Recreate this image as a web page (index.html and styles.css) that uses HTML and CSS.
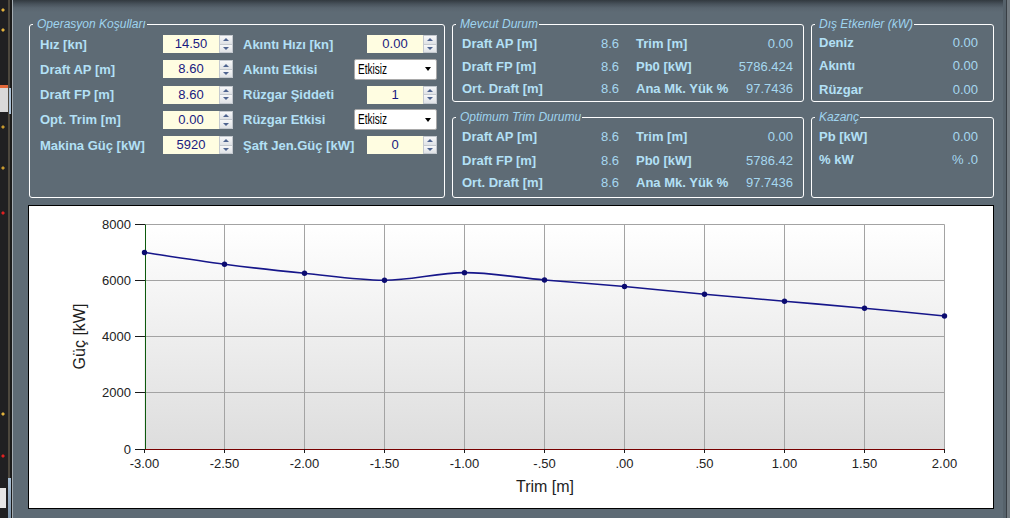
FILE: index.html
```html
<!DOCTYPE html>
<html lang="tr">
<head>
<meta charset="utf-8">
<title>Trim Optimizasyonu</title>
<link rel="stylesheet" href="styles.css">
</head>
<body>
<div class="window">
  <div class="edge-left"></div>
  <main class="main">
    <div class="top-row">
      <fieldset class="group g-op">
        <legend>Operasyon Koşulları</legend>
        <div class="op-grid">
          <span class="lbl">Hız [kn]</span>
          <div class="num"><span class="num-val">14.50</span><span class="spin"><i class="up"></i><i class="dn"></i></span></div>
          <span class="lbl lbl2">Akıntı Hızı [kn]</span>
          <div class="num num-r"><span class="num-val">0.00</span><span class="spin"><i class="up"></i><i class="dn"></i></span></div>

          <span class="lbl">Draft AP [m]</span>
          <div class="num"><span class="num-val">8.60</span><span class="spin"><i class="up"></i><i class="dn"></i></span></div>
          <span class="lbl lbl2">Akıntı Etkisi</span>
          <div class="combo"><span class="combo-text">Etkisiz</span><span class="combo-arrow"></span></div>

          <span class="lbl">Draft FP [m]</span>
          <div class="num"><span class="num-val">8.60</span><span class="spin"><i class="up"></i><i class="dn"></i></span></div>
          <span class="lbl lbl2">Rüzgar Şiddeti</span>
          <div class="num num-r"><span class="num-val">1</span><span class="spin"><i class="up"></i><i class="dn"></i></span></div>

          <span class="lbl">Opt. Trim [m]</span>
          <div class="num"><span class="num-val">0.00</span><span class="spin"><i class="up"></i><i class="dn"></i></span></div>
          <span class="lbl lbl2">Rüzgar Etkisi</span>
          <div class="combo"><span class="combo-text">Etkisiz</span><span class="combo-arrow"></span></div>

          <span class="lbl">Makina Güç [kW]</span>
          <div class="num"><span class="num-val">5920</span><span class="spin"><i class="up"></i><i class="dn"></i></span></div>
          <span class="lbl lbl2">Şaft Jen.Güç [kW]</span>
          <div class="num num-r"><span class="num-val">0</span><span class="spin"><i class="up"></i><i class="dn"></i></span></div>
        </div>
      </fieldset>

      <div class="col col-mid">
        <fieldset class="group g-a">
          <legend>Mevcut Durum</legend>
          <div class="kv-mid rows-a">
            <span class="lbl">Draft AP [m]</span><span class="val">8.6</span>
            <span class="lbl lbl3">Trim [m]</span><span class="val">0.00</span>
            <span class="lbl">Draft FP [m]</span><span class="val">8.6</span>
            <span class="lbl lbl3">Pb0 [kW]</span><span class="val">5786.424</span>
            <span class="lbl">Ort. Draft [m]</span><span class="val">8.6</span>
            <span class="lbl lbl3">Ana Mk. Yük %</span><span class="val">97.7436</span>
          </div>
        </fieldset>
        <fieldset class="group g-b">
          <legend>Optimum Trim Durumu</legend>
          <div class="kv-mid rows-b">
            <span class="lbl">Draft AP [m]</span><span class="val">8.6</span>
            <span class="lbl lbl3">Trim [m]</span><span class="val">0.00</span>
            <span class="lbl">Draft FP [m]</span><span class="val">8.6</span>
            <span class="lbl lbl3">Pb0 [kW]</span><span class="val">5786.42</span>
            <span class="lbl">Ort. Draft [m]</span><span class="val">8.6</span>
            <span class="lbl lbl3">Ana Mk. Yük %</span><span class="val">97.7436</span>
          </div>
        </fieldset>
      </div>

      <div class="col col-right">
        <fieldset class="group g-a">
          <legend>Dış Etkenler (kW)</legend>
          <div class="kv-right rows-c">
            <span class="lbl">Deniz</span><span class="val">0.00</span>
            <span class="lbl">Akıntı</span><span class="val">0.00</span>
            <span class="lbl">Rüzgar</span><span class="val">0.00</span>
          </div>
        </fieldset>
        <fieldset class="group g-b">
          <legend>Kazanç</legend>
          <div class="kv-right rows-d">
            <span class="lbl">Pb [kW]</span><span class="val">0.00</span>
            <span class="lbl">% kW</span><span class="val">% .0</span>
          </div>
        </fieldset>
      </div>
    </div>

    <div class="chart">
      <svg class="chart-svg" width="964" height="302" viewBox="0 0 964 302" xmlns="http://www.w3.org/2000/svg">
        <defs>
          <linearGradient id="plotbg" x1="0" y1="0" x2="0" y2="1">
            <stop offset="0" stop-color="#ffffff"/>
            <stop offset="1" stop-color="#dddddd"/>
          </linearGradient>
        </defs>
        <rect x="115.5" y="18.5" width="800" height="225" fill="url(#plotbg)"/>
        <g stroke="#a3a3a3" stroke-width="1" fill="none">
          <line x1="115.5" y1="18.5" x2="915.5" y2="18.5"/>
          <line x1="115.5" y1="74.5" x2="915.5" y2="74.5"/>
          <line x1="115.5" y1="130.5" x2="915.5" y2="130.5"/>
          <line x1="115.5" y1="186.5" x2="915.5" y2="186.5"/>
          <line x1="195.5" y1="18.5" x2="195.5" y2="243"/>
          <line x1="275.5" y1="18.5" x2="275.5" y2="243"/>
          <line x1="355.5" y1="18.5" x2="355.5" y2="243"/>
          <line x1="435.5" y1="18.5" x2="435.5" y2="243"/>
          <line x1="515.5" y1="18.5" x2="515.5" y2="243"/>
          <line x1="595.5" y1="18.5" x2="595.5" y2="243"/>
          <line x1="675.5" y1="18.5" x2="675.5" y2="243"/>
          <line x1="755.5" y1="18.5" x2="755.5" y2="243"/>
          <line x1="835.5" y1="18.5" x2="835.5" y2="243"/>
          <line x1="915.5" y1="18.5" x2="915.5" y2="243"/>
        </g>
        <line x1="116.5" y1="18.5" x2="116.5" y2="243.5" stroke="#0d5a0d" stroke-width="1"/>
        <line x1="116" y1="243.5" x2="916" y2="243.5" stroke="#780000" stroke-width="1"/>
        <g stroke="#1a1a1a" stroke-width="1">
          <line x1="106" y1="18.5" x2="116" y2="18.5"/>
          <line x1="106" y1="74.5" x2="116" y2="74.5"/>
          <line x1="106" y1="130.5" x2="116" y2="130.5"/>
          <line x1="106" y1="186.5" x2="116" y2="186.5"/>
          <line x1="106" y1="243.5" x2="116" y2="243.5"/>
          <line x1="115.5" y1="243" x2="115.5" y2="247"/>
          <line x1="195.5" y1="243" x2="195.5" y2="247"/>
          <line x1="275.5" y1="243" x2="275.5" y2="247"/>
          <line x1="355.5" y1="243" x2="355.5" y2="247"/>
          <line x1="435.5" y1="243" x2="435.5" y2="247"/>
          <line x1="515.5" y1="243" x2="515.5" y2="247"/>
          <line x1="595.5" y1="243" x2="595.5" y2="247"/>
          <line x1="675.5" y1="243" x2="675.5" y2="247"/>
          <line x1="755.5" y1="243" x2="755.5" y2="247"/>
          <line x1="835.5" y1="243" x2="835.5" y2="247"/>
          <line x1="915.5" y1="243" x2="915.5" y2="247"/>
        </g>
        <g class="tick-y" text-anchor="end">
          <text x="102" y="23">8000</text>
          <text x="102" y="79">6000</text>
          <text x="102" y="135">4000</text>
          <text x="102" y="191">2000</text>
          <text x="102" y="248">0</text>
        </g>
        <g class="tick-x" text-anchor="middle">
          <text x="115.5" y="262">-3.00</text>
          <text x="195.5" y="262">-2.50</text>
          <text x="275.5" y="262">-2.00</text>
          <text x="355.5" y="262">-1.50</text>
          <text x="435.5" y="262">-1.00</text>
          <text x="515.5" y="262">-.50</text>
          <text x="595.5" y="262">.00</text>
          <text x="675.5" y="262">.50</text>
          <text x="755.5" y="262">1.00</text>
          <text x="835.5" y="262">1.50</text>
          <text x="915.5" y="262">2.00</text>
        </g>
        <text class="axis-title" text-anchor="middle" transform="translate(56 130.5) rotate(-90)">Güç [kW]</text>
        <text class="axis-title" text-anchor="middle" x="516" y="286">Trim [m]</text>
        <path d="M115.5,46.5 C128.83,48.46 168.83,54.81 195.5,58.26 C222.17,61.71 248.83,64.56 275.5,67.22 C302.17,69.88 328.83,74.31 355.5,74.22 C382.17,74.13 408.83,66.71 435.5,66.66 C462.17,66.61 488.83,71.64 515.5,73.94 C542.17,76.25 568.83,78.11 595.5,80.49 C622.17,82.87 648.83,85.77 675.5,88.22 C702.17,90.68 728.83,92.89 755.5,95.22 C782.17,97.55 808.83,99.75 835.5,102.22 C862.17,104.69 902.17,108.75 915.5,110.06" fill="none" stroke="#16168a" stroke-width="1.6"/>
        <g fill="#0b0b70">
          <circle cx="115.5" cy="46.5" r="2.7"/>
          <circle cx="195.5" cy="58.26" r="2.7"/>
          <circle cx="275.5" cy="67.22" r="2.7"/>
          <circle cx="355.5" cy="74.22" r="2.7"/>
          <circle cx="435.5" cy="66.66" r="2.7"/>
          <circle cx="515.5" cy="73.94" r="2.7"/>
          <circle cx="595.5" cy="80.49" r="2.7"/>
          <circle cx="675.5" cy="88.22" r="2.7"/>
          <circle cx="755.5" cy="95.22" r="2.7"/>
          <circle cx="835.5" cy="102.22" r="2.7"/>
          <circle cx="915.5" cy="110.06" r="2.7"/>
        </g>
      </svg>
    </div>
  </main>
  <div class="edge-right"></div>
</div>
</body>
</html>
```

FILE: styles.css
```css
* {
  box-sizing: border-box;
}

html,
body {
  margin: 0;
  padding: 0;
}

body {
  width: 1010px;
  height: 518px;
  overflow: hidden;
  background: #5e6b75;
  font-family: "Liberation Sans", Arial, sans-serif;
}

.window {
  display: flex;
  height: 518px;
}

.edge-left {
  flex: 0 0 13px;
  background-color: #1d1d1f;
  background-image:
    radial-gradient(circle 2px at 3px 10px, #e3b23c 55%, transparent 100%),
    radial-gradient(circle 2px at 3px 30px, #e3b23c 55%, transparent 100%),
    radial-gradient(circle 2px at 3px 127px, #c99a2e 55%, transparent 100%),
    radial-gradient(circle 2px at 3px 168px, #c99a2e 55%, transparent 100%),
    radial-gradient(circle 2px at 3px 213px, #e02020 55%, transparent 100%),
    radial-gradient(circle 2px at 3px 414px, #e3b23c 55%, transparent 100%),
    radial-gradient(circle 2px at 3px 456px, #e02020 55%, transparent 100%),
    linear-gradient(#e2683a, #e2683a),
    linear-gradient(#d9d9d9, #d9d9d9),
    linear-gradient(#e6e6e6, #e6e6e6),
    linear-gradient(#a9c0d6, #a9c0d6),
    linear-gradient(#a9c0d6, #7d94aa),
    linear-gradient(to right, #202022 0 8px, #4d483e 8px 10px, #1a1a1a 10px 12px, #a4acb2 12px 13px);
  background-repeat: no-repeat;
  background-position:
    0 0, 0 0, 0 0, 0 0, 0 0, 0 0, 0 0,
    0 85px,
    0 88px,
    0 488px,
    9px 88px,
    8px 478px,
    0 0;
  background-size:
    auto, auto, auto, auto, auto, auto, auto,
    8px 3px,
    8px 24px,
    6px 20px,
    2px 26px,
    3px 40px,
    100% 100%;
}

.edge-right {
  flex: 0 0 7px;
  background: linear-gradient(to right, #56626b 0 3px, #383e44 3px 4px, #737b81 4px 7px);
}

.main {
  flex: 1;
  display: flex;
  flex-direction: column;
  padding: 17px 9px 9px 15px;
  background: linear-gradient(to bottom, #32393f 0, #48525b 4px, #59656f 8px, #5e6b75 12px, #5e6b75 100%);
}

.top-row {
  display: flex;
  gap: 7px;
  height: 181px;
  padding-left: 1px;
}

.col {
  display: flex;
  flex-direction: column;
  gap: 8px;
}

.col-mid {
  width: 352px;
}

.col-right {
  width: 183px;
}

.group {
  margin: 0;
  padding: 0;
  min-width: 0;
  border: 1px solid #ffffff;
  border-radius: 3px;
}

.group legend {
  margin-left: 3px;
  padding: 0 1px 0 4px;
  font: italic 12px/14px "Liberation Sans", Arial, sans-serif;
  color: #9fd4ef;
}

.g-op {
  width: 416px;
  height: 181px;
}

.g-a {
  height: 85px;
}

.g-b {
  height: 88px;
}

.lbl {
  font: bold 13px/15px "Liberation Sans", Arial, sans-serif;
  color: #b3e0f6;
  white-space: nowrap;
}

.val {
  font: 13px/15px "Liberation Sans", Arial, sans-serif;
  color: #a6d8f0;
  text-align: right;
  white-space: nowrap;
}

/* Operasyon grid */
.op-grid {
  display: grid;
  grid-template-columns: 123px 70px 121px 83px;
  grid-auto-rows: 25.25px;
  align-items: center;
  padding: 0.5px 0 0 10px;
}

.lbl2 {
  padding-left: 10px;
}

.num {
  display: flex;
  width: 70px;
  height: 18px;
  background: #fffde1;
}

.num-r {
  justify-self: end;
}

.num-val {
  flex: 1;
  text-align: center;
  font: 13px/18px "Liberation Sans", Arial, sans-serif;
  color: #191980;
}

.spin {
  width: 14px;
  display: flex;
  flex-direction: column;
  border: 1px solid #c4c9cf;
  background: #eceef1;
}

.spin i {
  flex: 1;
  display: flex;
  align-items: center;
  justify-content: center;
  background: linear-gradient(to bottom, #f7f8f9, #dfe2e6);
}

.spin i + i {
  border-top: 1px solid #c4c9cf;
}

.spin .up::before {
  content: "";
  border-left: 3px solid transparent;
  border-right: 3px solid transparent;
  border-bottom: 3px solid #4f6490;
}

.spin .dn::before {
  content: "";
  border-left: 3px solid transparent;
  border-right: 3px solid transparent;
  border-top: 3px solid #4f6490;
}

.combo {
  width: 83px;
  height: 21px;
  display: flex;
  align-items: center;
  justify-content: space-between;
  padding: 0 5px 0 3px;
  background: #ffffff;
  border: 1px solid #a9a9a9;
  border-radius: 2px;
}

.combo-text {
  display: inline-block;
  width: 30px;
  font: 14px/15px "Liberation Sans", Arial, sans-serif;
  color: #000000;
  white-space: nowrap;
  transform: scaleX(0.72);
  transform-origin: left center;
}

.combo-arrow {
  width: 0;
  height: 0;
  border-left: 3.5px solid transparent;
  border-right: 3.5px solid transparent;
  border-top: 4px solid #000000;
}

/* Result panels */
.kv-mid {
  display: grid;
  grid-template-columns: 117px 40px 117px 57px;
  align-items: center;
  padding: 0 9px;
}

.lbl3 {
  padding-left: 17px;
}

.kv-right {
  display: grid;
  grid-template-columns: 1fr auto;
  align-items: center;
  padding: 0 15px 0 7px;
}

.rows-a {
  grid-template-rows: 24px 22px 22px;
}

.rows-b {
  grid-template-rows: 25px 22px 22px;
}

.rows-c {
  grid-template-rows: 23px 23px 24px;
}

.rows-d {
  grid-template-rows: 24px 22px;
}

/* Chart */
.chart {
  margin-top: 7px;
  height: 304px;
  border: 1px solid #000000;
  background: #ffffff;
}

.chart-svg {
  display: block;
}

.tick-y text,
.tick-x text {
  font: 13px "Liberation Sans", Arial, sans-serif;
  fill: #222222;
}

.axis-title {
  font: 16px "Liberation Sans", Arial, sans-serif;
  fill: #1e1e1e;
}
```
